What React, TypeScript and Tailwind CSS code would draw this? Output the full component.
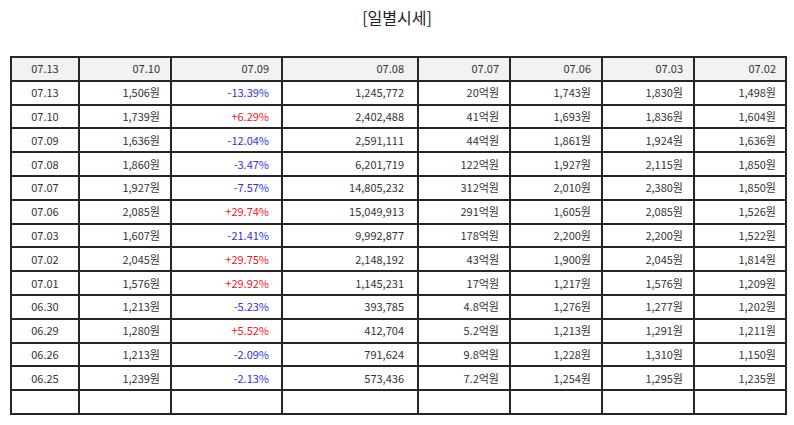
import React from "react";

const rows: string[][] = [
  ["07.13", "1,506원", "-13.39%", "1,245,772", "20억원", "1,743원", "1,830원", "1,498원"],
  ["07.10", "1,739원", "+6.29%", "2,402,488", "41억원", "1,693원", "1,836원", "1,604원"],
  ["07.09", "1,636원", "-12.04%", "2,591,111", "44억원", "1,861원", "1,924원", "1,636원"],
  ["07.08", "1,860원", "-3.47%", "6,201,719", "122억원", "1,927원", "2,115원", "1,850원"],
  ["07.07", "1,927원", "-7.57%", "14,805,232", "312억원", "2,010원", "2,380원", "1,850원"],
  ["07.06", "2,085원", "+29.74%", "15,049,913", "291억원", "1,605원", "2,085원", "1,526원"],
  ["07.03", "1,607원", "-21.41%", "9,992,877", "178억원", "2,200원", "2,200원", "1,522원"],
  ["07.02", "2,045원", "+29.75%", "2,148,192", "43억원", "1,900원", "2,045원", "1,814원"],
  ["07.01", "1,576원", "+29.92%", "1,145,231", "17억원", "1,217원", "1,576원", "1,209원"],
  ["06.30", "1,213원", "-5.23%", "393,785", "4.8억원", "1,276원", "1,277원", "1,202원"],
  ["06.29", "1,280원", "+5.52%", "412,704", "5.2억원", "1,213원", "1,291원", "1,211원"],
  ["06.26", "1,213원", "-2.09%", "791,624", "9.8억원", "1,228원", "1,310원", "1,150원"],
  ["06.25", "1,239원", "-2.13%", "573,436", "7.2억원", "1,254원", "1,295원", "1,235원"],
];

const header = ["07.13", "07.10", "07.09", "07.08", "07.07", "07.06", "07.03", "07.02"];
const widths = ["w-[68px]", "w-[92px]", "w-[111px]", "w-[136px]", "w-[92px]", "w-[92px]", "w-[92px]", "w-[92px]"];
const pads = ["text-center", "pr-[10px] text-right", "pr-[12px] text-right", "pr-[13px] text-right", "pr-[10px] text-right", "pr-[10px] text-right", "pr-[10px] text-right", "pr-[9px] text-right"];

function cellClass(i: number) {
  return `border-2 border-[#262626] h-[23.8px] p-0 ${pads[i]}`;
}

function colorFor(v: string) {
  if (v.startsWith("+")) return "text-[#e0202c]";
  if (v.startsWith("-")) return "text-[#3434c8]";
  return "";
}

export default function App() {
  return (
    <div
      className="w-[794px] h-[425px] bg-white text-[#333] overflow-hidden"
      style={{ fontFamily: '"Noto Sans CJK KR", "Noto Sans", sans-serif' }}
    >
      <div className="h-[34px] pt-[5px] text-center text-[16px] leading-[24px] text-[#222]">[일별시세]</div>
      <div className="pl-[10px] pt-[22px]">
        <table className="border-collapse table-fixed w-[775px] text-[11px] leading-none">
          <colgroup>
            {widths.map((w, i) => (
              <col key={i} className={w} />
            ))}
          </colgroup>
          <thead>
            <tr className="bg-[#f2f2f2]">
              {header.map((h, i) => (
                <td key={i} className={cellClass(i)}>
                  {h}
                </td>
              ))}
            </tr>
          </thead>
          <tbody>
            {rows.map((r, ri) => (
              <tr key={ri}>
                {r.map((v, i) => (
                  <td key={i} className={`${cellClass(i)} ${i === 2 ? colorFor(v) : ""}`}>
                    {v}
                  </td>
                ))}
              </tr>
            ))}
            <tr>
              {header.map((_, i) => (
                <td key={i} className={cellClass(i)}></td>
              ))}
            </tr>
          </tbody>
        </table>
      </div>
    </div>
  );
}
